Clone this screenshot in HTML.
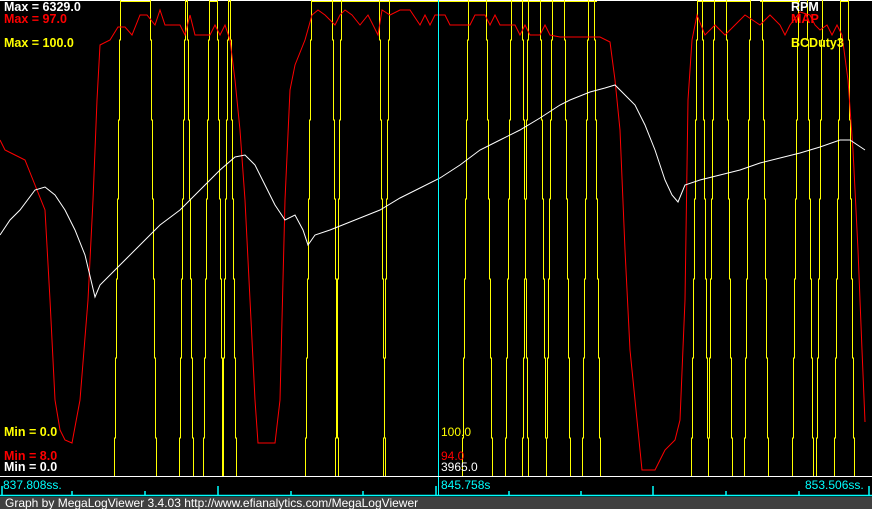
<!DOCTYPE html>
<html><head><style>
html,body{margin:0;padding:0;background:#000;width:872px;height:509px;overflow:hidden}
svg{display:block}
text{font-family:"Liberation Sans",sans-serif;font-size:12px}
.b{font-weight:bold;font-size:12.5px}
</style></head><body>
<svg width="872" height="509" viewBox="0 0 872 509">
<rect width="872" height="509" fill="#000"/>
<line x1="0" y1="0.5" x2="872" y2="0.5" stroke="#fff" shape-rendering="crispEdges"/>
<g stroke="#ff0" stroke-width="1" fill="none" shape-rendering="crispEdges">
<path d="M120 1.5H150M185 1.5H188M209 1.5H217M228 1.5H231M311 1.5H597M697 1.5H750M760 1.5H800M840 1.5H848"/>
<path d="
M120.5 0v40h-1v80h-1v79h-1v80h-1v79h-1v80h-1v38
M150.5 0v40h1v80h1v79h1v80h1v79h1v80h1v38
M185.5 0v40h-1v80h-1v79h-1v80h-1v79h-1v80h-1v38
M187.5 0v40h1v80h1v79h1v80h1v79h1v80h1v38
M209.5 0v40h-1v80h-1v79h-1v80h-1v79h-1v80h-1v38
M217.5 0v40h1v80h1v79h1v80h1v79h1v80h1v38
M228.5 0v40h-1v80h-1v79h-1v80h-1v79h-1v80h-1v38
M230.5 0v40h1v80h1v79h1v80h1v79h1v80h1v38
M311.5 0v40h-1v80h-1v79h-1v80h-1v79h-1v80h-1v38
M332.5 0v40h1v80h1v79h1v80h1v79h1v80h1v38
M341.5 0v40h-1v80h-1v79h-1v80h-1v79h-1v80h-1v38
M379.5 0v40h1v80h1v79h1v80h1v79h1v80h1v38
M389.5 0v40h-1v80h-1v79h-1v80h-1v79h-1v80h-1v38
M468.5 0v40h-1v80h-1v79h-1v80h-1v79h-1v80h-1v38
M486.5 0v40h1v80h1v79h1v80h1v79h1v80h1v38
M511.5 0v40h-1v80h-1v79h-1v80h-1v79h-1v80h-1v38
M522.5 0v40h1v80h1v79h1v80h1v79h1v80h1v38
M528.5 0v40h-1v80h-1v79h-1v80h-1v79h-1v80h-1v38
M540.5 0v40h1v80h1v79h1v80h1v79h1v80h1v38
M552.5 0v40h-1v80h-1v79h-1v80h-1v79h-1v80h-1v38
M564.5 0v40h1v80h1v79h1v80h1v79h1v80h1v38
M588.5 0v40h-1v80h-1v79h-1v80h-1v79h-1v80h-1v38
M594.5 0v40h1v80h1v79h1v80h1v79h1v80h1v38
M697.5 0v40h-1v80h-1v79h-1v80h-1v79h-1v80h-1v38
M702.5 0v40h1v80h1v79h1v80h1v79h1v80h1v38
M714.5 0v40h-1v80h-1v79h-1v80h-1v79h-1v80h-1v38
M726.5 0v40h1v80h1v79h1v80h1v79h1v80h1v38
M750.5 0v40h-1v80h-1v79h-1v80h-1v79h-1v80h-1v38
M762.5 0v40h1v80h1v79h1v80h1v79h1v80h1v38
M798.5 0v40h-1v80h-1v79h-1v80h-1v79h-1v80h-1v38
M807.5 0v40h1v80h1v79h1v80h1v79h1v80h1v38
M822.5 0v40h-1v80h-1v79h-1v80h-1v79h-1v80h-1v38
M840.5 0v40h-1v80h-1v79h-1v80h-1v79h-1v80h-1v38
M848.5 0v40h1v80h1v79h1v80h1v79h1v80h1v38"/>
</g>
<polyline fill="none" stroke="#f00" stroke-width="1" points="0,140 5,150 15,155 25,160 35,185 45,210 50,300 55,400 60,430 65,440 72,443 80,400 88,300 93,200 97,100 100,45 110,40 118,27 125,27 132,35 140,15 147,15 155,25 160,10 165,25 180,25 185,35 190,15 195,35 210,35 215,25 220,35 225,25 230,40 235,80 240,130 245,200 250,300 255,400 258,443 275,443 280,400 285,200 290,90 295,65 305,40 312,15 318,10 325,15 335,25 340,15 345,10 352,15 360,25 368,15 378,35 382,10 390,15 400,10 410,10 420,25 425,15 430,25 435,15 445,15 450,25 470,25 475,15 485,15 490,25 495,15 500,25 515,25 520,35 525,25 530,35 540,35 545,25 550,35 560,37 600,37 610,42 615,80 620,130 625,250 630,350 638,430 642,470 655,470 660,460 665,450 675,440 680,420 685,300 688,100 692,40 697,15 705,35 715,25 725,35 735,25 745,15 760,25 770,15 780,25 785,35 790,25 800,12 810,15 815,25 820,30 827,25 832,35 837,25 842,35 848,80 853,150 858,250 862,350 865,422"/>
<polyline fill="none" stroke="#fff" stroke-width="1" points="0,235 10,220 20,210 35,190 45,187 55,195 65,210 75,230 85,255 95,297 100,285 110,275 120,265 140,245 160,225 180,210 200,190 220,170 235,157 245,155 255,165 265,185 275,205 285,220 295,215 303,230 308,245 315,235 330,230 350,222 380,210 400,198 420,188 440,178 460,165 480,150 500,140 520,130 540,118 560,105 570,100 590,92 605,88 615,85 625,95 635,105 645,125 655,150 665,180 672,195 678,202 685,185 700,180 720,175 740,170 760,163 780,158 800,153 820,147 840,140 850,140 865,150"/>
<line x1="438.5" y1="0" x2="438.5" y2="496" stroke="#0ff" shape-rendering="crispEdges"/>
<line x1="0" y1="476.5" x2="872" y2="476.5" stroke="#fff" shape-rendering="crispEdges"/>
<line x1="0" y1="495.5" x2="872" y2="495.5" stroke="#0ff" stroke-width="1.5"/>
<g stroke="#0ff" stroke-width="1.5">
<path d="M2 496V486M72 496V491M145 496V491M218 496V486M291 496V491M363 496V491M436 496V486M509 496V491M581 496V491M653 496V486M726 496V491M799 496V491M869 496V486"/>
</g>
<rect x="0" y="497" width="872" height="12" fill="#404040"/>
<text x="5" y="507" fill="#fff" font-size="11.2">Graph by MegaLogViewer 3.4.03 http://www.efianalytics.com/MegaLogViewer</text>
<text x="4" y="11" fill="#fff" class="b">Max = 6329.0</text>
<text x="4" y="23" fill="#f00" class="b">Max = 97.0</text>
<text x="4" y="47" fill="#ff0" class="b">Max = 100.0</text>
<text x="4" y="436" fill="#ff0" class="b">Min = 0.0</text>
<text x="4" y="460" fill="#f00" class="b">Min = 8.0</text>
<text x="4" y="471" fill="#fff" class="b">Min = 0.0</text>
<text x="791" y="11" fill="#fff" class="b">RPM</text>
<text x="791" y="23" fill="#f00" class="b">MAP</text>
<text x="791" y="47" fill="#ff0" class="b">BCDuty3</text>
<text x="441" y="436" fill="#ff0">100.0</text>
<text x="441" y="460" fill="#f00">94.0</text>
<text x="441" y="471" fill="#fff">3965.0</text>
<text x="3" y="489" fill="#0ff">837.808ss.</text>
<text x="441" y="489" fill="#0ff">845.758s</text>
<text x="805" y="489" fill="#0ff">853.506ss.</text>
</svg>
</body></html>
